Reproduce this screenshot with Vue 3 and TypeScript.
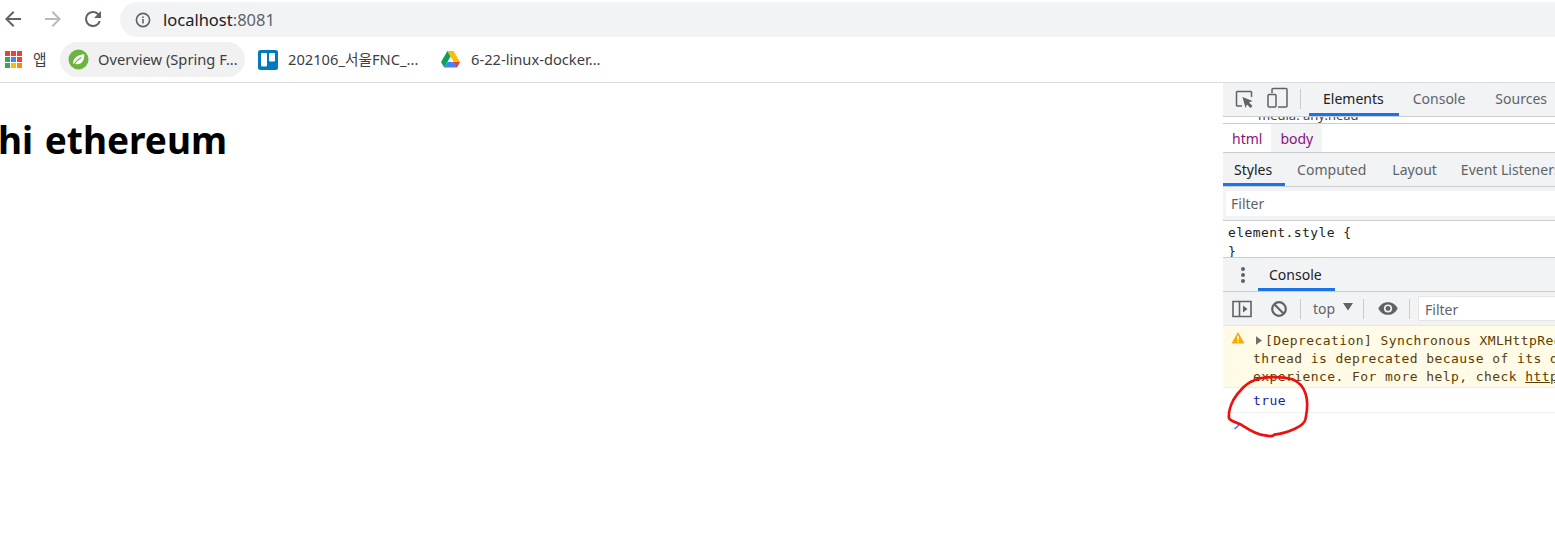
<script setup lang="ts">
const appDots = ['#ea4335','#ea4335','#ea4335','#34a853','#4285f4','#ea4335','#34a853','#fbbc05','#fb8c00']
</script>

<template>
  <div class="page">
    <header class="chrome">
      <div class="toolbar">
        <svg class="nav back" width="24" height="24" viewBox="0 0 24 24"><path d="M20 11H7.8l5.6-5.6L12 4l-8 8 8 8 1.4-1.4L7.8 13H20z" fill="#5f6368"/></svg>
        <svg class="nav fwd" width="24" height="24" viewBox="0 0 24 24"><path d="M4 11h12.2l-5.6-5.6L12 4l8 8-8 8-1.4-1.4 5.6-5.6H4z" fill="#bababa"/></svg>
        <svg class="nav reload" width="24" height="24" viewBox="0 0 24 24"><path d="M17.65 6.35A7.96 7.96 0 0 0 12 4a8 8 0 1 0 7.73 10h-2.08A6 6 0 1 1 12 6c1.66 0 3.14.69 4.22 1.78L13 11h7V4z" fill="#5f6368"/></svg>
        <div class="omnibox">
          <svg width="16" height="16" viewBox="0 0 16 16"><circle cx="8" cy="8" r="6.6" fill="none" stroke="#5f6368" stroke-width="1.6"/><rect x="7.2" y="7" width="1.6" height="4.4" fill="#5f6368"/><rect x="7.2" y="4.4" width="1.6" height="1.6" fill="#5f6368"/></svg>
          <span class="url"><span class="host">localhost</span><span class="port">:8081</span></span>
        </div>
      </div>
      <div class="bookmarks">
        <div class="apps">
          <i v-for="(c, i) in appDots" :key="i" class="dot" :style="{ background: c }"></i>
        </div>
        <span class="apps-label">앱</span>
        <div class="mark active">
          <svg width="21" height="21" viewBox="0 0 22 22"><circle cx="11" cy="11" r="10.500" fill="#6db33f"/><path d="M5.5 15.5C5 9.5 10 6 17 5.5c.5 6.500-3 11-8 10.500-1.500 0-2.500-.3-3.500-.5z" fill="#fff"/><path d="M6 16.500C8 13 10.500 11 14 9" stroke="#6db33f" stroke-width="1.200" fill="none"/></svg>
          <span>Overview (Spring F...</span>
        </div>
        <div class="mark">
          <svg width="20" height="20" viewBox="0 0 20 20"><rect width="20" height="20" rx="2.500" fill="#0079bf"/><rect x="3" y="3" width="6" height="13.500" rx="1" fill="#fff"/><rect x="11" y="3" width="6" height="8.500" rx="1" fill="#fff"/></svg>
          <span>202106_서울FNC_...</span>
        </div>
        <div class="mark">
          <svg width="19" height="17" viewBox="0 0 20 18"><path d="M6.700 0h6.600L20 11.600h-6.600z" fill="#fbbc04"/><path d="M6.700 0 0 11.600 3.300 17.400 10 5.800z" fill="#0f9d58"/><path d="M6.700 11.600H20l-3.300 5.800H3.300z" fill="#4285f4"/><path d="M13.400 11.600H20l-3.300 5.800z" fill="#ea4335"/></svg>
          <span>6-22-linux-docker...</span>
        </div>
      </div>
    </header>

    <div class="content">
      <main class="doc">
        <h1>hi ethereum</h1>
      </main>

      <aside class="devtools">
        <div class="tabs main-tabs">
          <svg class="ic" width="20" height="20" viewBox="0 0 20 20"><path d="M8 17H3.200a.7.7 0 0 1-.7-.7V3.200a.7.7 0 0 1 .7-.7h13.600a.7.7 0 0 1 .7.7V8" fill="none" stroke="#5f6368" stroke-width="1.500"/><path d="M8.500 8 18.500 12 15 13.500 18.500 17 16.500 19 13 15.500 11.500 19z" fill="#5f6368"/></svg>
          <svg class="ic2" width="22" height="22" viewBox="0 0 22 22"><path d="M6 6V2.500a1 1 0 0 1 1-1h13a1 1 0 0 1 1 1V19a1 1 0 0 1-1 1h-8" fill="none" stroke="#5f6368" stroke-width="1.500"/><rect x="2" y="7.500" width="8" height="12.500" rx="1" fill="none" stroke="#5f6368" stroke-width="1.500"/></svg>
          <span class="sep"></span>
          <span class="tab on elements">Elements</span>
          <span class="tab">Console</span>
          <span class="tab">Sources</span>
        </div>
        <div class="clipped"><span>media: any.head</span></div>
        <div class="crumbs">
          <span class="crumb">html</span>
          <span class="crumb cur">body</span>
        </div>
        <div class="tabs style-tabs">
          <span class="tab on styles">Styles</span>
          <span class="tab">Computed</span>
          <span class="tab">Layout</span>
          <span class="tab last">Event Listeners</span>
        </div>
        <div class="filter-row"><div class="filter-box">Filter</div></div>
        <div class="rules">
          <div>element.style {</div>
          <div class="brace">}</div>
        </div>
        <div class="tabs drawer-tabs">
          <span class="kebab"><i></i><i></i><i></i></span>
          <span class="tab on console-tab">Console</span>
        </div>
        <div class="console-bar">
          <svg width="20" height="18" viewBox="0 0 20 18"><path d="M1 1.500h18v15H1zM7.500 1.500v15" fill="none" stroke="#5f6368" stroke-width="1.600"/><path d="M11 5.500 15.500 9 11 12.500z" fill="#5f6368"/></svg>
          <svg class="block" width="18" height="18" viewBox="0 0 18 18"><circle cx="9" cy="9" r="6.800" fill="none" stroke="#5f6368" stroke-width="2.200"/><path d="M4.300 4.300 13.700 13.700" stroke="#5f6368" stroke-width="2.200"/></svg>
          <span class="bar-sep"></span>
          <span class="top">top</span>
          <svg class="caret" width="10" height="8" viewBox="0 0 10 8"><path d="M0 0h10L5 7.500z" fill="#5f6368"/></svg>
          <span class="bar-sep two"></span>
          <svg class="eye" width="20" height="13" viewBox="0 0 22 14"><path d="M11 0C6 0 2 3 0.500 7 2 11 6 14 11 14s9-3 10.500-7C20 3 16 0 11 0z" fill="#5f6368"/><circle cx="11" cy="7" r="4.500" fill="#f1f3f4"/><circle cx="11" cy="7" r="2.700" fill="#5f6368"/></svg>
          <span class="bar-sep three"></span>
          <div class="console-filter">Filter</div>
        </div>
        <div class="warning">
          <svg class="warn-ic" width="14" height="12" viewBox="0 0 14 13"><path d="M7 0 14 12.500H0z" fill="#f2ab00"/><rect x="6.200" y="4" width="1.600" height="4.500" fill="#fff"/><rect x="6.200" y="9.500" width="1.600" height="1.600" fill="#fff"/></svg>
          <svg class="tri" width="6" height="9" viewBox="0 0 7 10"><path d="M0 0 7 5 0 10z" fill="#6e6e6e"/></svg>
          <div class="warn-text">
            <div>[Deprecation] Synchronous XMLHttpRequest on the main</div>
            <div>thread is deprecated because of its detrimental effects</div>
            <div>experience. For more help, check <u>https://xhr.spec.whatwg.org/</u></div>
          </div>
        </div>
        <div class="result">true</div>
        <div class="prompt">
          <svg width="8" height="10" viewBox="0 0 8 10"><path d="M1.500 1 6 5 1.500 9" fill="none" stroke="#367cf1" stroke-width="1.500"/></svg>
        </div>
        <svg class="scribble" width="340" height="125" viewBox="0 0 1020 375"><path d="M115 182C95 188 70 215 55 240 45 260 40 280 42 295 50 305 68 308 80 315 100 328 125 345 150 346 165 348 172 352 178 344 195 342 220 335 240 326 258 318 270 308 272 295 277 270 278 240 272 222 265 200 250 185 232 178 205 170 170 170 140 174 128 176 120 180 115 182z" fill="none" stroke="#ee0f0f" stroke-width="8" stroke-linejoin="round"/></svg>
      </aside>
    </div>
  </div>
</template>

<style>
html, body { margin: 0; background: #fff; overflow: hidden; }
</style>

<style scoped>
.page {
  width: 1555px;
  height: 549px;
  display: flex;
  flex-direction: column;
  overflow: hidden;
  font-family: "Open Sans", "Noto Sans CJK KR", sans-serif;
  color: #3c4043;
}
.chrome { height: 82px; border-bottom: 1px solid #dadce0; box-sizing: content-box; flex: none; }
.toolbar { height: 42px; display: flex; align-items: flex-start; }
.nav { margin-top: 7px; flex: none; }
.back { margin-left: 1px; }
.fwd { margin-left: 16px; }
.reload { margin-left: 16px; }
.omnibox {
  margin-left: 15px;
  margin-top: 2px;
  flex: 1;
  height: 35px;
  border-radius: 18px 0 0 18px;
  background: #f1f3f4;
  display: flex;
  align-items: center;
  padding-left: 15px;
}
.url { margin-left: 12px; font-size: 16.500px; font-family: "Noto Sans", sans-serif; }
.host { color: #202124; }
.port { color: #5f6368; }
.bookmarks { height: 40px; display: flex; align-items: flex-start; font-size: 14.700px; font-family: "Noto Sans", "Noto Sans CJK KR", sans-serif; }
.apps { display: grid; grid-template-columns: repeat(3, 5px); gap: 1px; margin-left: 5px; margin-top: 9px; }
.dot { display: block; width: 5px; height: 5px; }
.apps-label { margin-left: 11px; width: 14px; color: #3c4043; line-height: 35px; }
.mark { display: flex; align-items: center; gap: 10px; height: 35px; color: #3c4043; white-space: nowrap; }
.mark span { margin-top: -2px; }
.mark.active { margin-left: 13px; width: 185px; box-sizing: border-box; padding-left: 8px; gap: 9px; background: #f1f1f2; border-radius: 18px; }
.mark:nth-of-type(3) { margin-left: 13px; width: 183px; }
.mark:nth-of-type(4) { gap: 11px; }
.content { flex: 1; display: flex; min-height: 0; }
.doc { flex: 1; min-width: 0; }
h1 {
  margin: 31px 0 0 -2px;
  font-size: 37px;
  line-height: 52px;
  word-spacing: 2px;
  font-weight: 700;
  color: #000;
  font-family: "Noto Sans", sans-serif;
}
.devtools {
  width: 332px;
  flex: none;
  box-sizing: border-box;
  position: relative;
  font-size: 14px;
  font-family: "Noto Sans", sans-serif;
  overflow: hidden;
}
.tabs { display: flex; align-items: center; background: #f1f3f4; white-space: nowrap; color: #5f6368; border-bottom: 1px solid #cbcdd1; box-sizing: border-box; }
.tab { display: flex; align-items: center; height: 100%; box-sizing: border-box; border-bottom: 3px solid transparent; padding-top: 1px; }
.tab.on { color: #202124; border-bottom-color: #1a73e8; }
.main-tabs { height: 34px; }
.ic { margin-left: 11px; margin-top: -2px; flex: none; }
.ic2 { margin-left: 12px; margin-top: -3px; flex: none; }
.sep { width: 1px; height: 20px; background: #ccc; margin-left: 12px; margin-top: -2px; }
.main-tabs .tab { margin-left: 30px; }
.main-tabs .tab.elements { margin-left: 8px; padding: 1px 15px 0 14px; }
.main-tabs .elements + .tab { margin-left: 14px; }
.clipped { height: 7px; box-sizing: border-box; overflow: hidden; position: relative; border-bottom: 1px solid #cbcdd1; background: #fff; }
.clipped span { position: absolute; left: 35px; top: -11px; font: 13px "Noto Sans", sans-serif; color: #444; white-space: nowrap; }
.crumbs { height: 29px; box-sizing: border-box; display: flex; border-bottom: 1px solid #cbcdd1; color: #881280; }
.crumb { display: flex; align-items: center; padding: 0 9px; }
.crumb.cur { background: #f1f3f4; }
.style-tabs { height: 34px; }
.style-tabs .tab { margin-left: 26px; padding-top: 2px; }
.style-tabs .tab.last { margin-left: 24px; }
.style-tabs .tab.styles { margin-left: 0; padding: 2px 13px 0 11px; }
.style-tabs .tab:nth-child(2) { margin-left: 12px; }
.filter-row { height: 34px; box-sizing: border-box; background: #f1f3f4; padding: 4px 0 4px 3px; border-bottom: 1px solid #cbcdd1; }
.filter-box { height: 25px; background: #fff; line-height: 25px; padding-left: 5px; color: #5f6368; }
.rules { height: 37px; overflow: hidden; padding: 3px 0 0 5px; box-sizing: border-box; font: 13px/18px "DejaVu Sans Mono", monospace; letter-spacing: 0.400px; color: #222; border-bottom: 1px solid #cbcdd1; }
.brace { color: #222; margin-top: 1px; }
.drawer-tabs { height: 34px; }
.kebab { display: flex; flex-direction: column; gap: 2px; margin-left: 18px; }
.kebab i { width: 4px; height: 4px; border-radius: 50%; background: #5f6368; }
.console-tab { margin-left: 13px; padding: 2px 13px 0 11px; }
.console-bar { height: 33px; background: #f1f3f4; display: flex; align-items: center; color: #5f6368; box-sizing: border-box; }
.console-bar > svg:first-child { margin-left: 9px; }
.block { margin-left: 18px; }
.bar-sep { width: 1px; height: 20px; background: #ccc; margin-left: 12px; }
.top { margin-left: 12px; width: 24px; }
.caret { margin-left: 6px; margin-top: -4px; }
.bar-sep.two { margin-left: 10px; }
.eye { margin-left: 14px; }
.bar-sep.three { margin-left: 11px; }
.console-filter { margin-left: 8px; flex: 1; height: 25px; background: #fff; line-height: 25px; padding-left: 6px; border: 1px solid #e5e5e5; border-right: 0; box-sizing: border-box; }
.warning { height: 63px; box-sizing: border-box; background: #fffbe7; border-top: 1px solid #f5e9b5; border-bottom: 1px solid #f5efcf; position: relative; padding: 6px 0 0 30px; font: 13px/18px "DejaVu Sans Mono", monospace; color: #5c3c00; white-space: nowrap; letter-spacing: 0.420px; }
.warn-ic { position: absolute; left: 8px; top: 6px; }
.tri { position: absolute; left: 33px; top: 10px; }
.warn-text > div:first-child { margin-left: 12px; }
.result { height: 25px; box-sizing: border-box; border-bottom: 1px solid #eee; padding: 4px 0 0 30px; font: 13px/18px "DejaVu Sans Mono", monospace; letter-spacing: 0.420px; color: #1c1ca8; }
.prompt { padding: 2px 0 0 10px; height: 16px; }
.scribble { position: absolute; left: -8px; top: 237px; }
</style>
